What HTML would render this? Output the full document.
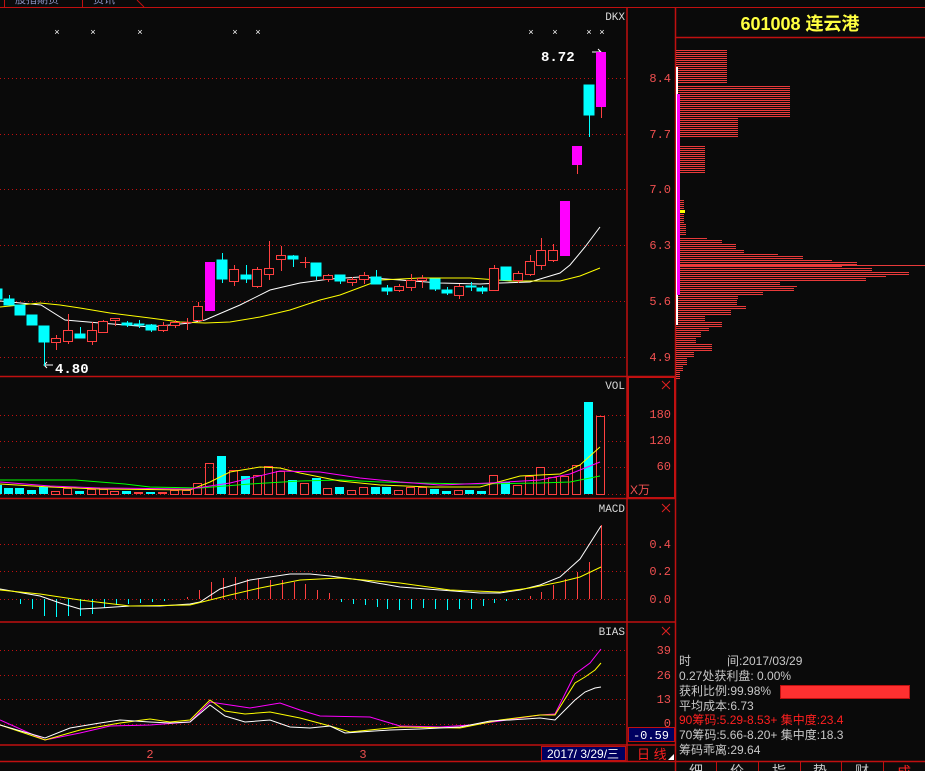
<!DOCTYPE html>
<html><head><meta charset="utf-8"><style>
html,body{margin:0;padding:0;background:#0a0a0a;width:925px;height:771px;overflow:hidden}
svg{display:block}
.m{font-family:"Liberation Mono","DejaVu Sans Mono",monospace}
.s{font-family:"Liberation Sans","Noto Sans CJK SC",sans-serif}
</style></head><body>
<svg width="925" height="771" viewBox="0 0 925 771" xmlns="http://www.w3.org/2000/svg">
<defs>
<pattern id="st" width="4" height="2" patternUnits="userSpaceOnUse"><rect width="4" height="1" fill="#e83a3a"/></pattern>
</defs>
<rect width="925" height="771" fill="#0a0a0a"/>
<g stroke="#c01010" stroke-width="1">
<line x1="0" y1="7.5" x2="925" y2="7.5"/>
<line x1="4.5" y1="0" x2="4.5" y2="7"/><line x1="82.5" y1="0" x2="82.5" y2="7"/>
<line x1="137" y1="0" x2="144" y2="7"/>
</g>
<text x="15" y="3" fill="#8890c0" font-size="11" class="s">股指期货</text>
<text x="93" y="3" fill="#8890c0" font-size="11" class="s">资讯</text>
<g stroke="#c01010" stroke-width="1.5">
<line x1="627" y1="7" x2="627" y2="762"/>
<line x1="675.5" y1="7" x2="675.5" y2="771"/>
<line x1="0" y1="376.5" x2="675" y2="376.5"/>
<line x1="0" y1="498.5" x2="675" y2="498.5"/>
<line x1="0" y1="622" x2="675" y2="622"/>
<line x1="0" y1="745" x2="675" y2="745"/>
<line x1="0" y1="761.5" x2="925" y2="761.5"/>
<line x1="675" y1="37.5" x2="925" y2="37.5"/>
</g>
<rect x="628" y="377" width="47" height="121" fill="none" stroke="#c01010" stroke-width="2"/>
<g stroke="#c01010" stroke-width="1" stroke-dasharray="1 3">
<line x1="0" y1="78.5" x2="627" y2="78.5"/><line x1="0" y1="134.5" x2="627" y2="134.5"/>
<line x1="0" y1="189.5" x2="627" y2="189.5"/><line x1="0" y1="245.5" x2="627" y2="245.5"/>
<line x1="0" y1="301.5" x2="627" y2="301.5"/><line x1="0" y1="357.5" x2="627" y2="357.5"/>
<line x1="0" y1="415.5" x2="627" y2="415.5"/><line x1="0" y1="441.5" x2="627" y2="441.5"/><line x1="0" y1="467.5" x2="627" y2="467.5"/><line x1="0" y1="494.5" x2="627" y2="494.5"/>
<line x1="0" y1="544.5" x2="627" y2="544.5"/><line x1="0" y1="571.5" x2="627" y2="571.5"/><line x1="0" y1="599.5" x2="627" y2="599.5"/>
<line x1="0" y1="650.5" x2="627" y2="650.5"/><line x1="0" y1="675.5" x2="627" y2="675.5"/><line x1="0" y1="699.5" x2="627" y2="699.5"/><line x1="0" y1="724.5" x2="627" y2="724.5"/>
</g>
<g fill="#f05050" font-size="12" class="m" text-anchor="end">
<text x="671" y="82">8.4</text><text x="671" y="138">7.7</text><text x="671" y="193">7.0</text>
<text x="671" y="249">6.3</text><text x="671" y="305">5.6</text><text x="671" y="361">4.9</text>
<text x="671" y="418">180</text><text x="671" y="444">120</text><text x="671" y="470">60</text>
<text x="671" y="548">0.4</text><text x="671" y="575">0.2</text><text x="671" y="603">0.0</text>
<text x="671" y="654">39</text><text x="671" y="679">26</text><text x="671" y="703">13</text><text x="671" y="727">0</text>
</g>
<text x="630" y="494" fill="#f05050" font-size="12" class="s">X万</text>
<g stroke="#e02020" stroke-width="1">
<path d="M662 381l8 8M670 381l-8 8"/><path d="M662 504l8 8M670 504l-8 8"/><path d="M662 627l8 8M670 627l-8 8"/>
</g>
<g fill="#d8d8d8" font-size="11" class="m" text-anchor="end">
<text x="625" y="20">DKX</text><text x="625" y="389">VOL</text><text x="625" y="512">MACD</text><text x="625" y="635">BIAS</text>
</g>
<g fill="#fff" font-size="9" class="m" text-anchor="middle">
<text x="57" y="35">×</text><text x="93" y="35">×</text><text x="140" y="35">×</text><text x="235" y="35">×</text><text x="258" y="35">×</text>
<text x="531" y="35">×</text><text x="555" y="35">×</text><text x="589" y="35">×</text><text x="602" y="35">×</text>
</g>
<text x="541" y="61" fill="#fff" font-size="14" font-weight="bold" class="m">8.72</text>
<path d="M592 52h9M598 49l3 3-3 3" stroke="#fff" fill="none"/>
<path d="M44 365h9M47 362l-3 3 3 3" stroke="#fff" fill="none"/>
<text x="55" y="373" fill="#fff" font-size="14" font-weight="bold" class="m">4.80</text>
<polyline fill="none" stroke="#fff" stroke-width="1" points="0,301 41,305 65,320 100,323 150,327 190,323 205,320 240,305 270,290 300,283 330,279 360,277 400,280 440,283 480,284 500,283 530,282 560,273 570,265 585,247 600,227"/>
<polyline fill="none" stroke="#ffff00" stroke-width="1" points="0,307 40,303 60,305 80,308 110,313 150,318 180,322 205,323 230,322 260,317 290,310 320,300 340,295 380,280 420,278 470,278 510,281 560,281 580,276 600,268"/>
<g stroke="#00ffff" fill="#00ffff">
<rect x="0" y="289" width="2" height="10"/>
<line x1="9.5" y1="295" x2="9.5" y2="305"/><rect x="4" y="299" width="10" height="6"/>
<rect x="15" y="305" width="10" height="10"/>
<rect x="27" y="315" width="10" height="10"/>
<line x1="44.5" y1="342" x2="44.5" y2="366"/><rect x="39" y="326" width="10" height="16"/>
<line x1="80.5" y1="327" x2="80.5" y2="338"/><rect x="75" y="334" width="10" height="4"/>
<line x1="127.5" y1="321" x2="127.5" y2="327"/><rect x="122" y="323" width="10" height="2"/>
<line x1="139.5" y1="320" x2="139.5" y2="328"/><rect x="134" y="324" width="10" height="1"/>
<line x1="151.5" y1="324" x2="151.5" y2="332"/><rect x="146" y="325" width="10" height="5"/>
<line x1="222.5" y1="253" x2="222.5" y2="283"/><rect x="217" y="260" width="10" height="19"/>
<line x1="246.5" y1="265" x2="246.5" y2="283"/><rect x="241" y="275" width="10" height="4"/>
<line x1="293.5" y1="255" x2="293.5" y2="267"/><rect x="288" y="256" width="10" height="3"/>
<line x1="316.5" y1="263" x2="316.5" y2="280"/><rect x="311" y="263" width="10" height="13"/>
<line x1="340.5" y1="275" x2="340.5" y2="284"/><rect x="335" y="275" width="10" height="6"/>
<line x1="376.5" y1="270" x2="376.5" y2="284"/><rect x="371" y="277" width="10" height="7"/>
<line x1="387.5" y1="285" x2="387.5" y2="295"/><rect x="382" y="288" width="10" height="3"/>
<line x1="435.5" y1="279" x2="435.5" y2="291"/><rect x="430" y="279" width="10" height="10"/>
<line x1="447.5" y1="287" x2="447.5" y2="295"/><rect x="442" y="290" width="10" height="3"/>
<line x1="471.5" y1="282" x2="471.5" y2="291"/><rect x="466" y="286" width="10" height="1"/>
<line x1="482.5" y1="286" x2="482.5" y2="294"/><rect x="477" y="288" width="10" height="3"/>
<rect x="501" y="267" width="10" height="13"/>
<line x1="589.5" y1="115" x2="589.5" y2="137"/><rect x="584" y="85" width="10" height="30"/>
</g>
<g stroke="#ff4040" fill="#0a0a0a">
<line x1="56.5" y1="335" x2="56.5" y2="350"/><rect x="51.5" y="338.5" width="9" height="4"/>
<line x1="68.5" y1="314" x2="68.5" y2="344"/><rect x="63.5" y="330.5" width="9" height="11"/>
<line x1="92.5" y1="322" x2="92.5" y2="345"/><rect x="87.5" y="330.5" width="9" height="11"/>
<line x1="103.5" y1="320" x2="103.5" y2="333"/><rect x="98.5" y="321.5" width="9" height="11"/>
<line x1="115.5" y1="318" x2="115.5" y2="326"/><rect x="110.5" y="318.5" width="9" height="2"/>
<line x1="163.5" y1="322" x2="163.5" y2="332"/><rect x="158.5" y="325.5" width="9" height="5"/>
<line x1="175.5" y1="320" x2="175.5" y2="328"/><rect x="170.5" y="322.5" width="9" height="3"/>
<line x1="187.5" y1="318" x2="187.5" y2="330"/><line x1="182" y1="322.5" x2="192" y2="322.5"/>
<line x1="198.5" y1="302" x2="198.5" y2="322"/><rect x="193.5" y="306.5" width="9" height="14"/>
<line x1="234.5" y1="265" x2="234.5" y2="286"/><rect x="229.5" y="269.5" width="9" height="12"/>
<line x1="257.5" y1="267" x2="257.5" y2="288"/><rect x="252.5" y="269.5" width="9" height="17"/>
<line x1="269.5" y1="241" x2="269.5" y2="280"/><rect x="264.5" y="268.5" width="9" height="6"/>
<line x1="281.5" y1="246" x2="281.5" y2="271"/><rect x="276.5" y="255.5" width="9" height="4"/>
<line x1="305.5" y1="257" x2="305.5" y2="268"/><line x1="300" y1="262.5" x2="310" y2="262.5"/>
<line x1="328.5" y1="274" x2="328.5" y2="282"/><rect x="323.5" y="275.5" width="9" height="4"/>
<line x1="352.5" y1="277" x2="352.5" y2="286"/><rect x="347.5" y="279.5" width="9" height="3"/>
<line x1="364.5" y1="272" x2="364.5" y2="284"/><rect x="359.5" y="275.5" width="9" height="4"/>
<line x1="399.5" y1="284" x2="399.5" y2="292"/><rect x="394.5" y="286.5" width="9" height="4"/>
<line x1="411.5" y1="274" x2="411.5" y2="291"/><rect x="406.5" y="280.5" width="9" height="7"/>
<line x1="422.5" y1="275" x2="422.5" y2="288"/><rect x="417.5" y="278.5" width="9" height="2"/>
<line x1="459.5" y1="284" x2="459.5" y2="299"/><rect x="454.5" y="286.5" width="9" height="9"/>
<line x1="494.5" y1="265" x2="494.5" y2="291"/><rect x="489.5" y="268.5" width="9" height="22"/>
<line x1="518.5" y1="271" x2="518.5" y2="283"/><rect x="513.5" y="273.5" width="9" height="7"/>
<line x1="530.5" y1="255" x2="530.5" y2="276"/><rect x="525.5" y="261.5" width="9" height="13"/>
<line x1="541.5" y1="238" x2="541.5" y2="270"/><rect x="536.5" y="250.5" width="9" height="15"/>
<line x1="553.5" y1="244" x2="553.5" y2="262"/><rect x="548.5" y="250.5" width="9" height="10"/>
<line x1="577.5" y1="165" x2="577.5" y2="174"/>
<line x1="601.5" y1="107" x2="601.5" y2="118"/>
</g>
<g fill="#ff00ff">
<rect x="205" y="262" width="10" height="49"/>
<rect x="560" y="201" width="10" height="55"/>
<rect x="572" y="146" width="10" height="19"/>
<rect x="596" y="52" width="10" height="55"/>
</g>
<g fill="#00ffff">
<rect x="0" y="485" width="2" height="9"/><rect x="4" y="488" width="9" height="6"/><rect x="15" y="488" width="9" height="6"/><rect x="27" y="490" width="9" height="4"/><rect x="39" y="487" width="9" height="7"/>
<rect x="75" y="491" width="9" height="3"/><rect x="122" y="491" width="9" height="3"/><rect x="146" y="492" width="9" height="2"/>
<rect x="217" y="456" width="9" height="38"/><rect x="241" y="476" width="9" height="18"/><rect x="288" y="480" width="9" height="14"/><rect x="312" y="478" width="9" height="16"/>
<rect x="335" y="487" width="9" height="7"/><rect x="371" y="487" width="9" height="7"/><rect x="382" y="487" width="9" height="7"/>
<rect x="430" y="489" width="9" height="5"/><rect x="442" y="491" width="9" height="3"/><rect x="465" y="490" width="9" height="4"/><rect x="477" y="491" width="9" height="3"/>
<rect x="501" y="482" width="9" height="12"/><rect x="584" y="402" width="9" height="92"/>
</g>
<g fill="#ff4040"><rect x="134" y="492" width="9" height="2"/><rect x="158" y="492" width="9" height="2"/></g>
<g fill="none" stroke="#ff4040">
<rect x="51.5" y="491.5" width="8" height="3"/><rect x="63.5" y="488.5" width="8" height="6"/><rect x="87.5" y="489.5" width="8" height="5"/><rect x="99.5" y="489.5" width="8" height="5"/><rect x="110.5" y="491.5" width="8" height="3"/>
<rect x="170.5" y="490.5" width="8" height="4"/><rect x="182.5" y="490.5" width="8" height="4"/><rect x="193.5" y="483.5" width="8" height="11"/>
<rect x="205.5" y="463.5" width="8" height="31"/><rect x="229.5" y="470.5" width="8" height="24"/><rect x="253.5" y="475.5" width="8" height="19"/><rect x="264.5" y="466.5" width="8" height="28"/><rect x="276.5" y="471.5" width="8" height="23"/>
<rect x="300.5" y="483.5" width="8" height="11"/><rect x="323.5" y="488.5" width="8" height="6"/><rect x="347.5" y="490.5" width="8" height="4"/><rect x="359.5" y="487.5" width="8" height="7"/>
<rect x="394.5" y="490.5" width="8" height="4"/><rect x="406.5" y="487.5" width="8" height="7"/><rect x="418.5" y="487.5" width="8" height="7"/><rect x="454.5" y="490.5" width="8" height="4"/>
<rect x="489.5" y="475.5" width="8" height="19"/><rect x="513.5" y="485.5" width="8" height="9"/><rect x="525.5" y="476.5" width="8" height="18"/><rect x="536.5" y="467.5" width="8" height="27"/><rect x="548.5" y="477.5" width="8" height="17"/><rect x="560.5" y="476.5" width="8" height="18"/><rect x="572.5" y="465.5" width="8" height="29"/>
<rect x="596.5" y="416.5" width="8" height="78"/>
</g>
<polyline fill="none" stroke="#00ff00" points="0,480 75,480 125,484 150,487 200,488 250,484 300,481 340,480 380,482 420,483 470,484 540,483 570,482 600,476"/>
<polyline fill="none" stroke="#ffff00" points="0,484 50,487 100,489 190,490 210,482 230,472 260,467 280,468 300,473 340,481 380,485 430,487 480,487 520,476 560,474 580,465 600,447"/>
<polyline fill="none" stroke="#ff00ff" points="0,482 50,486 100,488 190,489 230,483 280,471 320,472 360,478 400,482 440,485 490,483 540,480 570,474 600,462"/>
<g stroke="#00ffff">
<path d="M20.5 599v5M32.5 599v10M44.5 599v17M56.5 599v18M68.5 599v17M80.5 599v17M92.5 599v15M104.5 599v9M116.5 599v6M128.5 599v5M140.5 599v4M152.5 599v3M164.5 599v2"/>
<path d="M341.5 599v3M353.5 599v5M365.5 599v6M377.5 599v8M387.5 599v10M399.5 599v11M411.5 599v10M423.5 599v9M435.5 599v10M447.5 599v11M459.5 599v10M471.5 599v10M483.5 599v7M494.5 599v4M506.5 599v2M518.5 599v1"/>
</g>
<g stroke="#ff4040">
<path d="M187.5 599v-2M199.5 599v-9M211.5 599v-17M223.5 599v-21M235.5 599v-22M247.5 599v-20M258.5 599v-20M270.5 599v-19M282.5 599v-19M294.5 599v-17M305.5 599v-15M317.5 599v-9M329.5 599v-6"/>
<path d="M530.5 599v-3M541.5 599v-7M553.5 599v-14M565.5 599v-20M577.5 599v-27M589.5 599v-37M601.5 599v-74"/>
</g>
<polyline fill="none" stroke="#fff" points="0,589 40,596 60,603 80,609 100,608 130,606 160,606 190,604 200,602 220,589 250,580 290,574 310,574 330,576 360,580 400,587 440,590 480,593 500,593 520,590 540,585 560,577 580,559 601,526"/>
<polyline fill="none" stroke="#ffff00" points="0,590 40,594 80,600 130,606 190,605 230,595 260,588 300,580 340,578 400,583 450,590 500,592 530,588 560,582 580,577 601,567"/>
<polyline fill="none" stroke="#ff00ff" points="0,720 45,740 80,733 110,726 150,725 190,722 210,702 230,705 250,708 280,703 300,710 320,716 370,717 400,726 440,727 470,725 500,721 540,715 555,714 575,674 590,663 601,649"/>
<polyline fill="none" stroke="#ffff00" points="0,725 45,740 80,730 120,723 150,719 170,722 190,720 210,700 225,711 245,714 270,712 300,718 330,726 350,732 400,727 460,728 500,720 540,715 555,715 575,683 585,677 595,670 601,663"/>
<polyline fill="none" stroke="#fff" points="0,725 45,738 70,728 100,723 120,720 150,722 170,723 190,722 210,705 225,716 245,722 270,720 290,727 310,728 330,726 345,733 390,730 420,729 460,727 490,721 510,720 540,718 555,720 575,700 585,692 595,688 601,687"/>
<rect x="628.5" y="727.5" width="46" height="14" fill="#000060" stroke="#c01010"/>
<text x="651" y="739" fill="#fff" font-size="12" class="m" text-anchor="middle">-0.59</text>
<text x="150" y="758" fill="#f05050" font-size="12" class="m" text-anchor="middle">2</text>
<text x="363" y="758" fill="#f05050" font-size="12" class="m" text-anchor="middle">3</text>
<rect x="541.5" y="746.5" width="84" height="14" fill="#000060" stroke="#c01010"/>
<text x="583" y="758" fill="#fff" font-size="12" class="s" text-anchor="middle">2017/ 3/29/三</text>
<text x="637" y="759" fill="#ff2020" font-size="13" class="s">日 线</text>
<path d="M668 760l6-6v6z" fill="#fff"/>
<text x="800" y="30" fill="#ffff40" font-size="18" font-weight="bold" class="s" text-anchor="middle">601008 连云港</text>
<g fill="url(#st)">
<rect x="676" y="50" width="51" height="34"/>
<rect x="676" y="85" width="114" height="33"/>
<rect x="676" y="118" width="62" height="20"/>
<rect x="676" y="145" width="29" height="29"/>
<rect x="676" y="199" width="8" height="24"/>
<rect x="676" y="223" width="10" height="13"/>
<rect x="676" y="237" width="31" height="3"/><rect x="676" y="240" width="46" height="4"/><rect x="676" y="244" width="60" height="6"/><rect x="676" y="250" width="68" height="3"/>
<rect x="676" y="253" width="102" height="2"/><rect x="676" y="255" width="127" height="4"/><rect x="676" y="259" width="156" height="3"/><rect x="676" y="262" width="181" height="3"/>
<rect x="676" y="265" width="166" height="3"/><rect x="676" y="268" width="196" height="4"/><rect x="676" y="272" width="233" height="3"/><rect x="676" y="275" width="210" height="3"/>
<rect x="676" y="278" width="190" height="4"/><rect x="676" y="282" width="104" height="3"/><rect x="676" y="285" width="121" height="3"/><rect x="676" y="288" width="118" height="4"/>
<rect x="676" y="292" width="87" height="3"/><rect x="676" y="295" width="62" height="4"/><rect x="676" y="299" width="61" height="6"/><rect x="676" y="305" width="70" height="4"/>
<rect x="676" y="309" width="55" height="6"/><rect x="676" y="315" width="29" height="6"/><rect x="676" y="321" width="46" height="6"/><rect x="676" y="327" width="33" height="5"/>
<rect x="676" y="332" width="25" height="6"/><rect x="676" y="338" width="20" height="6"/><rect x="676" y="344" width="36" height="8"/><rect x="676" y="352" width="18" height="6"/>
<rect x="676" y="358" width="11" height="8"/><rect x="676" y="366" width="7" height="6"/><rect x="676" y="372" width="4" height="8"/>
</g>
<line x1="676" y1="265.5" x2="925" y2="265.5" stroke="#e83a3a"/>
<rect x="676" y="67" width="2" height="258" fill="#fff"/>
<rect x="677" y="94" width="3" height="201" fill="#ff00ff"/>
<rect x="680" y="210" width="5" height="3" fill="#ffff00"/>
<g font-size="12" class="s" fill="#c8c8c8">
<text x="679" y="665">时　　　间:2017/03/29</text>
<text x="679" y="680">0.27处获利盘: 0.00%</text>
<text x="679" y="695">获利比例:99.98%</text>
<text x="679" y="710">平均成本:6.73</text>
<text x="679" y="724" fill="#ff2020">90筹码:5.29-8.53+ 集中度:23.4</text>
<text x="679" y="739">70筹码:5.66-8.20+ 集中度:18.3</text>
<text x="679" y="754">筹码乖离:29.64</text>
</g>
<rect x="780.5" y="685.5" width="129" height="13" fill="#ff3030" stroke="#c01010"/>
<g stroke="#c01010"><path d="M716.5 762v9M758.5 762v9M800.5 762v9M841.5 762v9M883.5 762v9"/></g>
<g font-size="14" class="s" fill="#c8c8c8" text-anchor="middle">
<text x="696" y="776">细</text><text x="737" y="776">价</text><text x="779" y="776">指</text><text x="820" y="776">势</text><text x="862" y="776">财</text>
<text x="904" y="777" fill="#ff2020">成</text>
</g>
</svg>
</body></html>
